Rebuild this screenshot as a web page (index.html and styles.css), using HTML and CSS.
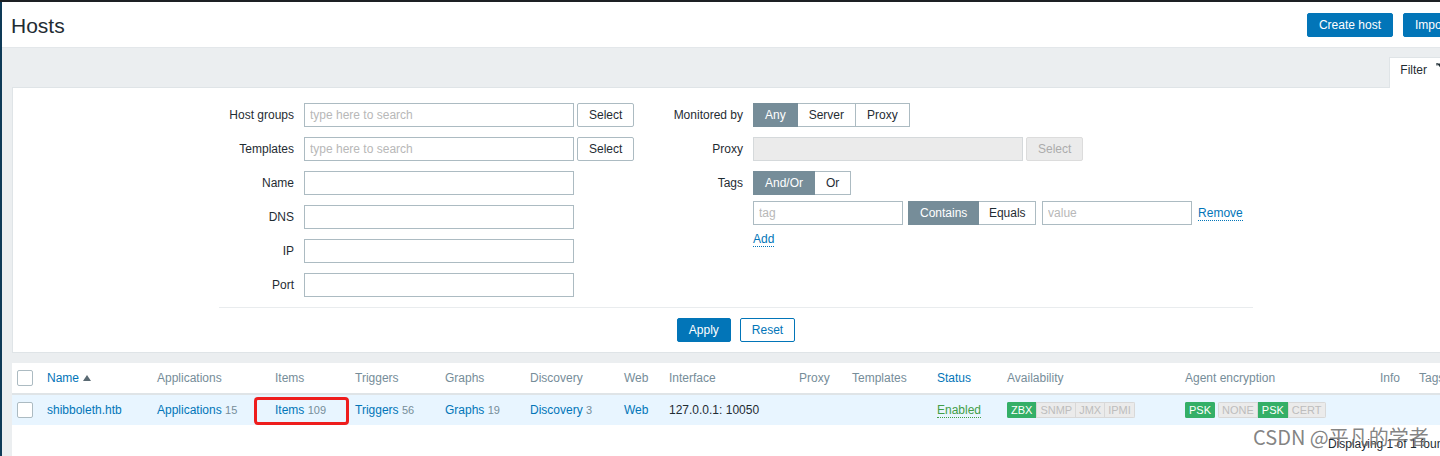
FILE: index.html
```html
<!DOCTYPE html>
<html lang="en">
<head>
<meta charset="utf-8">
<title>Hosts</title>
<link rel="stylesheet" href="styles.css">
</head>
<body>
<div class="page">
  <header class="page-header">
    <h1 class="title">Hosts</h1>
    <div class="header-actions">
      <button class="btn btn-primary">Create host</button>
      <button class="btn btn-primary">Import</button>
    </div>
  </header>

  <main class="content">
    <div class="filter-tabs">
      <div class="filter-tab">
        <span>Filter</span>
        <svg class="filter-icon" width="14" height="8" viewBox="0 0 14 8"><path d="M2 0.5 L10 0.5 L6 5.5 Z" fill="#1f2c33"/><path d="M2 0 L2 2.5" stroke="#1f2c33" stroke-width="1.2"/></svg>
      </div>
    </div>

    <section class="filter-panel">
      <div class="filter-forms">
        <div class="filter-col col-left">
          <label class="f-label">Host groups</label>
          <div class="f-ctrl"><input class="inp inp-wide" placeholder="type here to search"><button class="btn btn-grey">Select</button></div>
          <label class="f-label">Templates</label>
          <div class="f-ctrl"><input class="inp inp-wide" placeholder="type here to search"><button class="btn btn-grey">Select</button></div>
          <label class="f-label">Name</label>
          <div class="f-ctrl"><input class="inp inp-wide"></div>
          <label class="f-label">DNS</label>
          <div class="f-ctrl"><input class="inp inp-wide"></div>
          <label class="f-label">IP</label>
          <div class="f-ctrl"><input class="inp inp-wide"></div>
          <label class="f-label">Port</label>
          <div class="f-ctrl"><input class="inp inp-wide"></div>
        </div>

        <div class="filter-col col-right">
          <label class="f-label">Monitored by</label>
          <div class="f-ctrl">
            <div class="seg"><span class="seg-item on">Any</span><span class="seg-item">Server</span><span class="seg-item">Proxy</span></div>
          </div>
          <label class="f-label">Proxy</label>
          <div class="f-ctrl"><input class="inp inp-wide inp-disabled" disabled><button class="btn btn-disabled" disabled>Select</button></div>
          <label class="f-label">Tags</label>
          <div class="f-ctrl tags-ctrl">
            <div class="seg"><span class="seg-item on">And/Or</span><span class="seg-item">Or</span></div>
            <div class="tag-row">
              <input class="inp inp-tag" placeholder="tag">
              <div class="seg"><span class="seg-item on">Contains</span><span class="seg-item seg-narrow">Equals</span></div>
              <input class="inp inp-tag" placeholder="value">
              <a class="link-dotted">Remove</a>
            </div>
            <div class="add-row"><a class="link-dotted">Add</a></div>
          </div>
        </div>
      </div>
      <div class="filter-buttons">
        <button class="btn btn-primary">Apply</button>
        <button class="btn btn-alt">Reset</button>
      </div>
    </section>

    <section class="list">
      <table class="hosts">
        <thead>
          <tr>
            <th class="c-chk"><input type="checkbox" class="chk"></th>
            <th class="c-name"><span class="sort">Name</span><span class="arrow-up"></span></th>
            <th class="c-apps">Applications</th>
            <th class="c-items">Items</th>
            <th class="c-trig">Triggers</th>
            <th class="c-graphs">Graphs</th>
            <th class="c-disc">Discovery</th>
            <th class="c-web">Web</th>
            <th class="c-iface">Interface</th>
            <th class="c-proxy">Proxy</th>
            <th class="c-tpl">Templates</th>
            <th class="c-status"><span class="sort">Status</span></th>
            <th class="c-avail">Availability</th>
            <th class="c-enc">Agent encryption</th>
            <th class="c-info">Info</th>
            <th class="c-tags">Tags</th>
          </tr>
        </thead>
        <tbody>
          <tr class="row-hl">
            <td><input type="checkbox" class="chk"></td>
            <td><a class="link">shibboleth.htb</a></td>
            <td><a class="link">Applications</a> <span class="count">15</span></td>
            <td class="items-cell"><a class="link">Items</a> <span class="count">109</span><span class="highlight-box"></span></td>
            <td><a class="link">Triggers</a> <span class="count">56</span></td>
            <td><a class="link">Graphs</a> <span class="count">19</span></td>
            <td><a class="link">Discovery</a> <span class="count">3</span></td>
            <td><a class="link">Web</a></td>
            <td>127.0.0.1: 10050</td>
            <td></td>
            <td></td>
            <td><span class="enabled">Enabled</span></td>
            <td>
              <span class="badges"><span class="bdg green">ZBX</span><span class="bdg grey">SNMP</span><span class="bdg grey">JMX</span><span class="bdg grey">IPMI</span></span>
            </td>
            <td>
              <span class="badges"><span class="bdg green">PSK</span></span><span class="badges gap"><span class="bdg grey">NONE</span><span class="bdg green">PSK</span><span class="bdg grey">CERT</span></span>
            </td>
            <td></td>
            <td></td>
          </tr>
        </tbody>
      </table>
      <div class="paging">Displaying 1 of 1 found</div>
    </section>
  </main>
</div>
<div class="watermark">CSDN @平凡的学者</div>
</body>
</html>
```

FILE: styles.css
```css
* { box-sizing: border-box; }

html, body {
  margin: 0;
  padding: 0;
  overflow: hidden;
}

body {
  font-family: "Liberation Sans", Arial, sans-serif;
  font-size: 12px;
  color: #1f2c33;
  background: #ebeef0;
  border-top: 2px solid #1d2024;
  width: 1470px;
  height: 456px;
  position: relative;
}

.page {
  border-left: 2px solid #0e3a57;
  width: 1470px;
  height: 454px;
  background: #ebeef0;
}

/* header */
.page-header {
  height: 46px;
  background: #fff;
  border-bottom: 1px solid #e3e7ea;
  display: flex;
  align-items: center;
  justify-content: space-between;
  padding: 0 9px 0 9px;
}

.title {
  margin: 2px 0 0;
  font-size: 21px;
  font-weight: normal;
  color: #1f2c33;
}

.header-actions {
  display: flex;
  gap: 10px;
}

.btn {
  font: inherit;
  height: 24px;
  padding: 0 11px;
  border: 1px solid #acbbc2;
  border-radius: 2px;
  background: #fff;
  color: #1f2c33;
  line-height: 22px;
  cursor: pointer;
}

.btn-primary {
  background: #0275b8;
  border-color: #0275b8;
  color: #fff;
}

.btn-alt {
  background: #fff;
  border-color: #0275b8;
  color: #0275b8;
}

.btn-grey {
  margin-left: 3px;
}

.btn-disabled {
  margin-left: 3px;
  background: #ebebeb;
  border-color: #dcdcdc;
  color: #acacac;
}

/* content */
.content {
  padding: 9px 10px 0;
}

.filter-tabs {
  display: flex;
  justify-content: flex-end;
  height: 30px;
}

.filter-tab {
  position: relative;
  z-index: 1;
  height: 31px;
  background: #fff;
  border: 1px solid #dfe4e7;
  border-bottom: none;
  padding: 5px 10px 0;
  line-height: 14px;
  display: flex;
  align-items: flex-start;
}

.filter-icon {
  margin-left: 8px;
}

.filter-panel {
  background: #fff;
  border: 1px solid #dfe4e7;
  padding: 15px 0 10px;
}

.filter-forms {
  width: 1034px;
  margin: 0 auto;
  display: flex;
  align-items: flex-start;
  padding-bottom: 10px;
  border-bottom: 1px solid #e9ecee;
}

.filter-col {
  display: grid;
  column-gap: 10px;
  row-gap: 10px;
  align-items: start;
}

.col-left {
  width: 415px;
  grid-template-columns: 75px auto;
}

.col-right {
  grid-template-columns: 109px auto;
}

.f-label {
  text-align: right;
  line-height: 24px;
  height: 24px;
  white-space: nowrap;
}

.f-ctrl {
  display: flex;
  align-items: center;
}

.inp {
  font: inherit;
  height: 24px;
  border: 1px solid #acbbc2;
  padding: 0 5px;
  color: #1f2c33;
  background: #fff;
  outline: none;
}

.inp::placeholder {
  color: #b8b8b8;
}

.inp-wide {
  width: 270px;
}

.inp-tag {
  width: 150px;
}

.inp-disabled {
  background: #ebebeb;
  border-color: #d5d9db;
}

.seg {
  display: inline-flex;
}

.seg-item {
  height: 24px;
  line-height: 22px;
  padding: 0 11px;
  border: 1px solid #acbbc2;
  background: #fff;
  color: #1f2c33;
  white-space: nowrap;
}

.seg-item + .seg-item {
  margin-left: -1px;
}

.seg-item.seg-narrow {
  padding: 0 9.5px;
}

.seg-item.on {
  background: #768d99;
  border-color: #768d99;
  color: #fff;
  position: relative;
}

.tags-ctrl {
  flex-direction: column;
  align-items: flex-start;
}

.tag-row {
  display: flex;
  align-items: center;
  margin-top: 6px;
}

.tag-row .seg {
  margin-left: 5px;
}

.tag-row .seg + .inp {
  margin-left: 6px;
}

.link-dotted {
  color: #0275b8;
  border-bottom: 1px dotted #0275b8;
  line-height: 14px;
  cursor: pointer;
}

.tag-row .link-dotted {
  margin-left: 6px;
}

.add-row {
  margin-top: 7px;
  line-height: 14px;
}

.filter-buttons {
  display: flex;
  justify-content: center;
  gap: 9px;
  margin-top: 10px;
}

/* list */
.list {
  margin-top: 10px;
  background: #fff;
  width: 1448px;
}

.hosts {
  width: 1448px;
  border-collapse: collapse;
  table-layout: fixed;
}

.hosts th,
.hosts td {
  height: 31px;
  padding: 0 5px;
  text-align: left;
  vertical-align: middle;
  white-space: nowrap;
}

.hosts th {
  font-weight: normal;
  color: #768d99;
  border-bottom: 2px solid #dfe4e7;
}

.c-chk { width: 30px; }
.c-name { width: 110px; }
.c-apps { width: 118px; }
.c-items { width: 80px; }
.c-trig { width: 90px; }
.c-graphs { width: 85px; }
.c-disc { width: 94px; }
.c-web { width: 45px; }
.c-iface { width: 130px; }
.c-proxy { width: 53px; }
.c-tpl { width: 85px; }
.c-status { width: 70px; }
.c-avail { width: 178px; }
.c-enc { width: 195px; }
.c-info { width: 39px; }
.c-tags { width: 46px; }

.chk {
  appearance: none;
  -webkit-appearance: none;
  display: block;
  width: 16px;
  height: 16px;
  margin: 0;
  border: 1px solid #acbbc2;
  border-radius: 2px;
  background: #fff;
}

.sort {
  color: #0275b8;
}

.arrow-up {
  display: inline-block;
  width: 0;
  height: 0;
  margin-left: 4px;
  border-left: 4px solid transparent;
  border-right: 4px solid transparent;
  border-bottom: 6px solid #5a6a73;
  vertical-align: 1px;
}

.row-hl td {
  background: #e8f5ff;
}

.link {
  color: #0275b8;
  cursor: pointer;
}

.count {
  color: #768d99;
  font-size: 11px;
}

.items-cell {
  position: relative;
}

.highlight-box {
  position: absolute;
  left: -16px;
  top: 2px;
  width: 95px;
  height: 28px;
  border: 3px solid #ee1d1d;
  border-radius: 4px;
}

.enabled {
  color: #429e47;
  border-bottom: 1px dotted #429e47;
}

.badges {
  display: inline-flex;
  vertical-align: middle;
  border-radius: 2px;
  overflow: hidden;
}

.badges.gap {
  margin-left: 3px;
}

.bdg {
  height: 16px;
  line-height: 14px;
  padding: 0 3px;
  font-size: 11px;
  border: 1px solid transparent;
}

.bdg.green {
  background: #34af67;
  border-color: #34af67;
  color: #fff;
}

.bdg.grey {
  background: #ebebeb;
  border-color: #d8d8d8;
  color: #bdbdbd;
}

.bdg.grey + .bdg.grey {
  border-left: none;
}

.paging {
  height: 38px;
  line-height: 38px;
  text-align: right;
  padding-right: 10px;
  color: #1f2c33;
}

.watermark {
  position: absolute;
  left: 1253px;
  top: 425px;
  font-family: "Noto Sans CJK SC", "Noto Sans", sans-serif;
  font-size: 20px;
  line-height: 20px;
  color: rgba(110, 110, 110, 0.85);
  white-space: nowrap;
}
```
